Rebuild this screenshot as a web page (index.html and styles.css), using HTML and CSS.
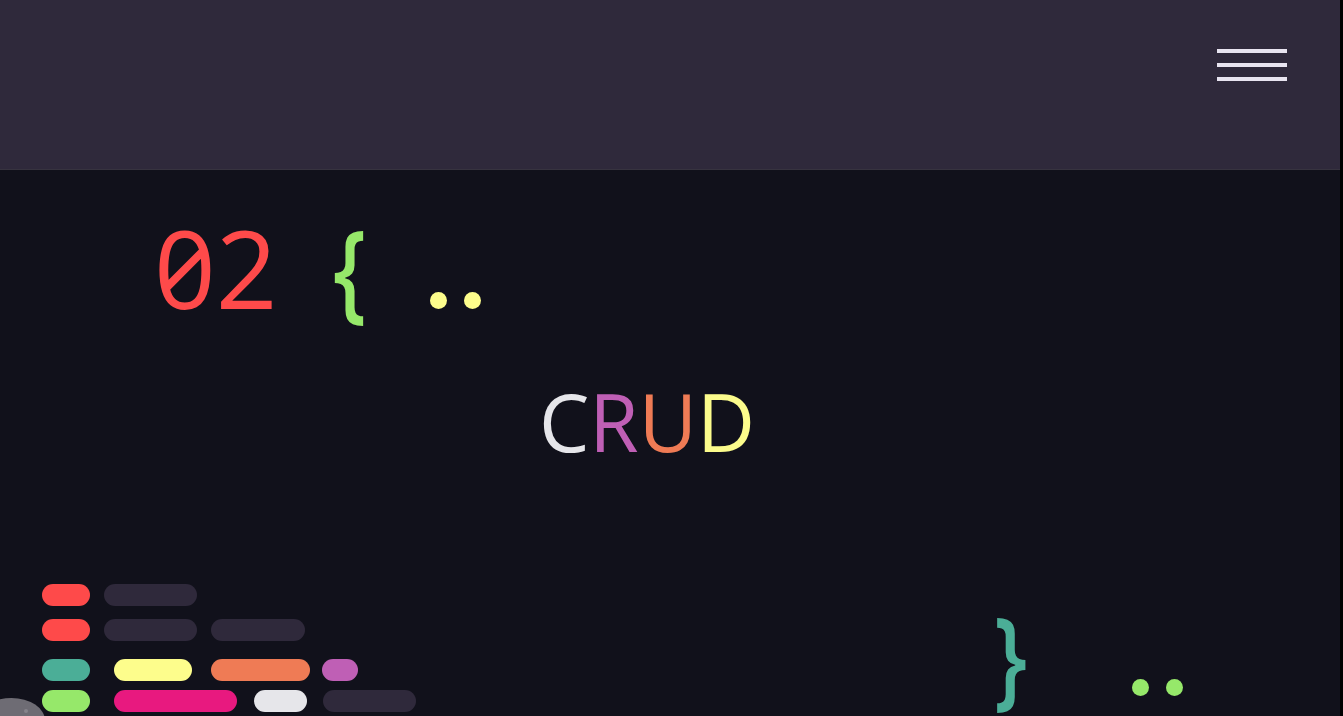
FILE: index.html
```html
<!DOCTYPE html>
<html lang="en">
<head>
<meta charset="utf-8">
<title>02 { CRUD }</title>
<link rel="stylesheet" href="styles.css">
</head>
<body>
<div class="page">
  <header class="topbar">
    <button class="menu-btn" aria-label="Menu">
      <span class="bar"></span>
      <span class="bar"></span>
      <span class="bar"></span>
    </button>
  </header>
  <main class="section">
    <div class="heading">
      <span class="num">02</span>
      <span class="brace open">{</span>
      <span class="dots dots-yellow"><i></i><i></i></span>
    </div>
    <h1 class="title"><span class="c">C</span><span class="r">R</span><span class="u">U</span><span class="d">D</span></h1>
    <div class="bottom">
      <div class="code">
        <div class="line line-1 gap14"><span class="pill red w48"></span><span class="pill dark w93"></span></div>
        <div class="line line-2 gap14"><span class="pill red w48"></span><span class="pill dark w93"></span><span class="pill dark w94"></span></div>
        <div class="line line-3"><span class="pill teal w48"></span><span class="pill yellow w78 ml24"></span><span class="pill orange w99 ml19"></span><span class="pill purple w36 ml12"></span></div>
        <div class="line line-4"><span class="pill green w48"></span><span class="pill pink w123 ml24"></span><span class="pill white w53 ml17"></span><span class="pill dark w93 ml16"></span></div>
      </div>
      <div class="closing">
        <span class="brace close">}</span>
        <span class="dots dots-green"><i></i><i></i></span>
      </div>
    </div>
    <button class="to-top" aria-label="Back to top"><span class="to-top-dot"></span></button>
  </main>
</div>
</body>
</html>
```
FILE: styles.css
```css
html, body {
  margin: 0;
  padding: 0;
  background: #000;
  height: 100%;
  overflow: hidden;
}
.page {
  width: calc(100% - 3px);
  height: 100%;
  background: #11111b;
  display: flex;
  flex-direction: column;
}
.topbar {
  flex: none;
  height: 170px;
  box-sizing: border-box;
  background: #2f293b;
  border-bottom: 1px solid #37333f;
  display: flex;
  justify-content: flex-end;
  align-items: flex-start;
  padding: 49px 53px 0 0;
}
.menu-btn {
  background: none;
  border: 0;
  padding: 0;
  width: 70px;
  display: flex;
  flex-direction: column;
  gap: 10px;
  cursor: pointer;
}
.bar {
  display: block;
  height: 4px;
  background: #e8e4f0;
}
.section {
  position: relative;
  flex: 1;
  display: flex;
  flex-direction: column;
  font-family: "Open Sans", sans-serif;
}
.heading {
  display: flex;
  align-items: baseline;
  padding-left: 154px;
  margin-top: 44px;
}
.num {
  font-size: 108px;
  line-height: 1;
  color: #fe4a4a;
  font-variant-numeric: slashed-zero;
}
.brace {
  display: inline-block;
  font-size: 108px;
  line-height: 1;
  font-weight: 600;
  transform: scaleX(0.8);
  transform-origin: left center;
}
.brace.open {
  color: #96e86a;
  margin-left: 55px;
}
.dots {
  display: flex;
  gap: 17px;
}
.dots i {
  display: block;
  width: 17px;
  height: 17px;
  border-radius: 50%;
}
.dots-yellow { margin-left: 56px; }
.dots-yellow i { background: #fdfd8c; }
.dots-green { margin-left: 96px; }
.dots-green i { background: #96e86a; }
.title {
  margin: 59px 0 0;
  padding-right: 46px;
  text-align: center;
  font-weight: 400;
  font-size: 80px;
  line-height: 1;
}
.title .c { color: #e6e6ea; }
.title .r { color: #bf5fb5; }
.title .u { color: #ef7b55; }
.title .d { color: #fcfc8c; }
.bottom {
  margin-top: auto;
  display: flex;
  align-items: flex-end;
  padding-left: 42px;
}
.code {
  display: flex;
  flex-direction: column;
  margin-bottom: 4px;
}
.line {
  display: flex;
  height: 22px;
}
.line-2 { margin-top: 13px; }
.line-3 { margin-top: 18px; }
.line-4 { margin-top: 9px; }
.gap14 { gap: 14px; }
.pill {
  display: block;
  height: 22px;
  border-radius: 11px;
}
.ml12 { margin-left: 12px; }
.ml16 { margin-left: 16px; }
.ml17 { margin-left: 17px; }
.ml19 { margin-left: 19px; }
.ml24 { margin-left: 24px; }
.w36 { width: 36px; }
.w48 { width: 48px; }
.w53 { width: 53px; }
.w78 { width: 78px; }
.w93 { width: 93px; }
.w94 { width: 94px; }
.w99 { width: 99px; }
.w123 { width: 123px; }
.red { background: #fe4a4a; }
.dark { background: #2f293b; }
.teal { background: #4bae97; }
.yellow { background: #fdfd8c; }
.orange { background: #ef7b55; }
.purple { background: #bf5fb5; }
.green { background: #96e86a; }
.pink { background: #e8197f; }
.white { background: #e6e6ea; }
.closing {
  display: flex;
  align-items: baseline;
  margin-left: 578px;
  margin-bottom: 7px;
}
.brace.close {
  color: #4bae97;
}
.to-top {
  position: absolute;
  left: -22px;
  bottom: -27px;
  width: 67px;
  height: 45px;
  border: 0;
  border-radius: 50%;
  background: #6e6c74;
  padding: 0;
}
.to-top-dot {
  position: absolute;
  left: 46px;
  top: 11px;
  width: 4px;
  height: 4px;
  border-radius: 50%;
  background: #86848b;
}
```
